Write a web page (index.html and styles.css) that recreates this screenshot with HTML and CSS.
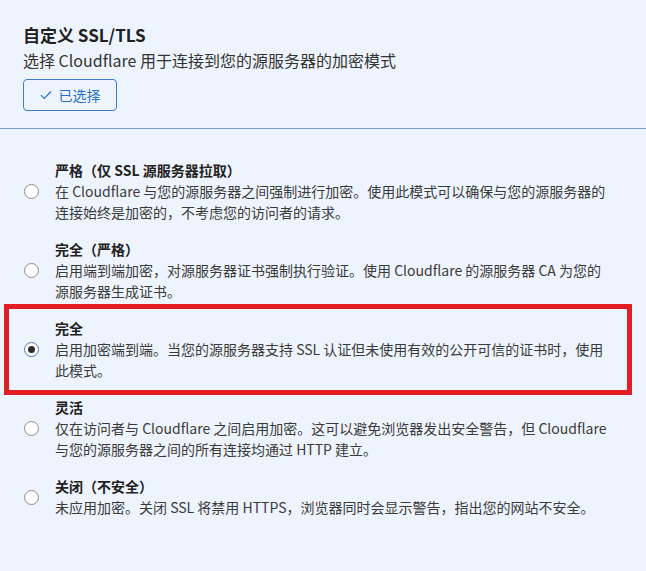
FILE: index.html
```html
<!DOCTYPE html>
<html lang="zh-CN">

<head>
    <meta charset="UTF-8">
    <title>自定义 SSL/TLS</title>
    <meta name="viewport" content="width=device-width, initial-scale=1">
    <link rel="stylesheet" href="styles.css">
</head>

<body>
    <header class="head">
        <h1 class="title">自定义 SSL/TLS</h1>
        <p class="subtitle">选择 Cloudflare 用于连接到您的源服务器的加密模式</p>
        <button class="chosen-btn">
            <svg class="check" width="12" height="10" viewBox="0 0 12 10">
                <path d="M1 5.2 L4.3 8.5 L11 1.5" fill="none" stroke="currentColor" stroke-width="1.2" />
            </svg>
            已选择
        </button>
    </header>

    <!-- 加密模式 -->
    <ul class="modes">
        <li class="mode">
            <span class="radio"></span>
            <div class="mode-text">
                <div class="mode-name">严格（仅 SSL 源服务器拉取）</div>
                <div class="mode-desc">在 Cloudflare 与您的源服务器之间强制进行加密。使用此模式可以确保与您的源服务器的连接始终是加密的，不考虑您的访问者的请求。</div>
            </div>
        </li>
        <li class="mode">
            <span class="radio"></span>
            <div class="mode-text">
                <div class="mode-name">完全（严格）</div>
                <div class="mode-desc">启用端到端加密，对源服务器证书强制执行验证。使用 Cloudflare 的源服务器 CA 为您的源服务器生成证书。</div>
            </div>
        </li>
        <li class="mode selected">
            <span class="radio checked"></span>
            <div class="mode-text">
                <div class="mode-name">完全</div>
                <div class="mode-desc">启用加密端到端。当您的源服务器支持 SSL 认证但未使用有效的公开可信的证书时，使用此模式。</div>
            </div>
        </li>
        <li class="mode">
            <span class="radio"></span>
            <div class="mode-text">
                <div class="mode-name">灵活</div>
                <div class="mode-desc">仅在访问者与 Cloudflare 之间启用加密。这可以避免浏览器发出安全警告，但 Cloudflare 与您的源服务器之间的所有连接均通过 HTTP 建立。</div>
            </div>
        </li>
        <li class="mode">
            <span class="radio"></span>
            <div class="mode-text">
                <div class="mode-name">关闭（不安全）</div>
                <div class="mode-desc">未应用加密。关闭 SSL 将禁用 HTTPS，浏览器同时会显示警告，指出您的网站不安全。</div>
            </div>
        </li>
    </ul>
</body>

</html>
```

FILE: styles.css
```css
body {
    background: #eef4fd;
    font-family: "Noto Sans CJK SC", sans-serif;
    color: #333;
    margin: 0;
    padding: 0;
}

.head {
    padding: 23px 23px 17px 23px;
    border-bottom: 1px solid #7b9fd4;
}

.title {
    font-size: 17px;
    line-height: 24px;
    font-weight: bold;
    color: #1f1f1f;
    margin: 0;
}

.subtitle {
    font-size: 16px;
    line-height: 24px;
    color: #333;
    margin: 1px 0 0 0;
}

.chosen-btn {
    display: flex;
    align-items: center;
    justify-content: center;
    gap: 7px;
    width: 94px;
    height: 32px;
    margin-top: 7px;
    background: transparent;
    border: 1px solid #3b7bd0;
    border-radius: 4px;
    color: #2c6ecb;
    font-family: inherit;
    font-size: 14px;
    padding: 0;
}

.modes {
    list-style: none;
    margin: 0;
    padding: 31px 23px 0 23px;
    display: flex;
    flex-direction: column;
    gap: 16px;
}

.mode {
    position: relative;
    display: flex;
    align-items: center;
    gap: 16px;
}

.radio {
    flex: none;
    width: 15px;
    height: 15px;
    margin-left: 1px;
    box-sizing: border-box;
    border: 1px solid #8c8c8c;
    border-radius: 50%;
    background: #fff;
    display: flex;
    align-items: center;
    justify-content: center;
}

.radio.checked {
    border-color: #5c74ad;
}

.radio.checked::before {
    content: "";
    width: 7px;
    height: 7px;
    border-radius: 50%;
    background: #2b2b2b;
}

.mode-text {
    max-width: 556px;
    font-size: 14px;
    line-height: 21px;
}

.mode-name {
    font-weight: bold;
    color: #222;
}

.mode-desc {
    color: #3a3a3a;
}

/* 红框标注 */
.mode.selected::after {
    content: "";
    position: absolute;
    top: -14px;
    bottom: -14px;
    left: -19px;
    right: -9px;
    border: 5px solid #e41c24;
}
```
